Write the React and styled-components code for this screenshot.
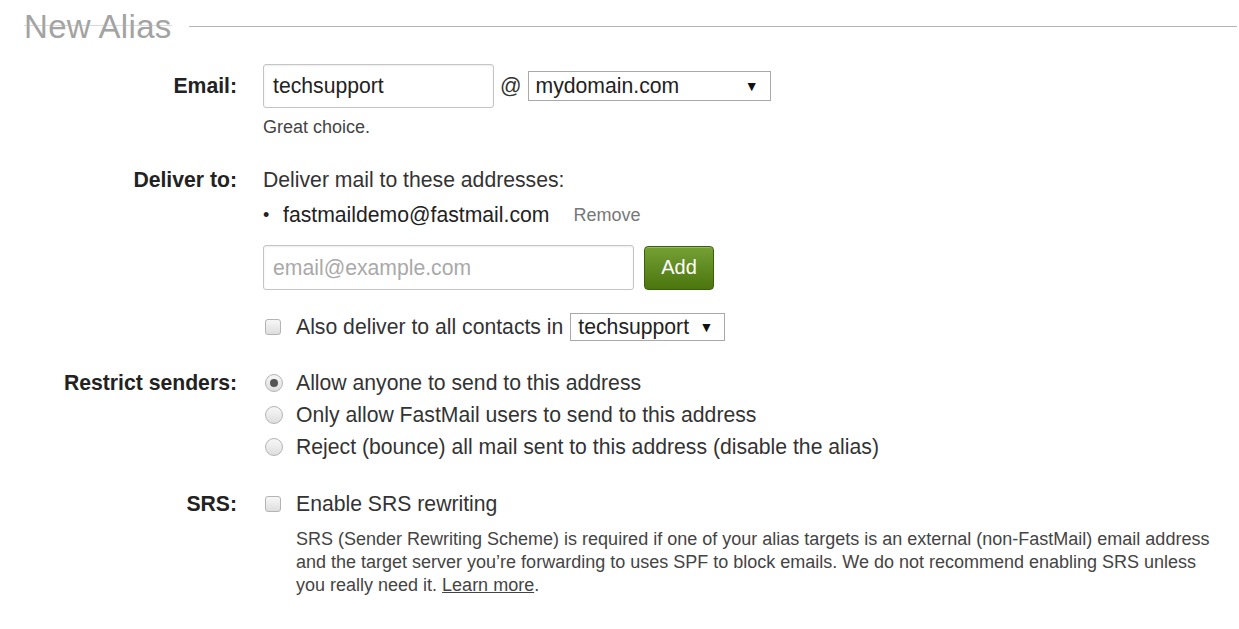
import React from "react";
import styled, { createGlobalStyle } from "styled-components";

const GlobalStyle = createGlobalStyle`
	body {
		margin: 0;
		background: #fff;
		font-family: "Liberation Sans", Arial, sans-serif;
		color: #333;
	}
`;

const App = () => {
	return (
		<Page>
			<GlobalStyle />
			<Header>
				<Title>New Alias</Title>
				<Rule />
			</Header>

			<Field $top={17}>
				<Label $lh={44}>Email:</Label>
				<Content>
					<InlineRow>
						<TextInput $width={231} $height={44}>techsupport</TextInput>
						<At>@</At>
						<Select $width={243} $height={30}>
							mydomain.com
							<Arrow>▼</Arrow>
						</Select>
					</InlineRow>
					<Hint>Great choice.</Hint>
				</Content>
			</Field>

			<Field $top={26}>
				<Label>Deliver to:</Label>
				<Content>
					<Line>Deliver mail to these addresses:</Line>
					<AddressItem>
						<Bullet>•</Bullet>
						fastmaildemo@fastmail.com
						<Remove>Remove</Remove>
					</AddressItem>
					<InlineRow $top={14}>
						<TextInput $width={371} $height={45} $placeholder>
							email@example.com
						</TextInput>
						<AddButton>Add</AddButton>
					</InlineRow>
					<Option $top={21}>
						<Checkbox />
						Also deliver to all contacts in
						<Select $width={155} $height={28} $left={7} $pad={7}>
							techsupport
							<Arrow>▼</Arrow>
						</Select>
					</Option>
				</Content>
			</Field>

			<Field $top={24}>
				<Label>Restrict senders:</Label>
				<Content>
					<Option>
						<Radio $checked />
						Allow anyone to send to this address
					</Option>
					<Option>
						<Radio />
						Only allow FastMail users to send to this address
					</Option>
					<Option>
						<Radio />
						Reject (bounce) all mail sent to this address (disable the alias)
					</Option>
				</Content>
			</Field>

			<Field $top={25}>
				<Label>SRS:</Label>
				<Content>
					<Option>
						<Checkbox />
						Enable SRS rewriting
					</Option>
					<Description>
						SRS (Sender Rewriting Scheme) is required if one of your alias targets is an
						external (non-FastMail) email address and the target server you’re forwarding
						to uses SPF to block emails. We do not recommend enabling SRS unless you
						really need it. <LearnMore href="#">Learn more</LearnMore>.
					</Description>
				</Content>
			</Field>
		</Page>
	);
};

const Page = styled.div`
	width: 1239px;
	min-height: 629px;
	font-size: 21.2px;
`;

const Header = styled.div`
	display: flex;
	align-items: center;
	padding: 7px 2px 0 24px;
	height: 40px;
`;

const Title = styled.h1`
	position: relative;
	margin: 0;
	font-size: 33px;
	font-weight: normal;
	letter-spacing: 0.3px;
	color: #a3a3a3;
	line-height: 40px;

	&::after {
		content: "";
		position: absolute;
		left: 0;
		right: 0;
		top: 18px;
		height: 1px;
		background: rgba(180, 180, 180, 0.5);
	}
`;

const Rule = styled.div`
	flex: 1;
	height: 1px;
	margin-left: 17px;
	margin-top: -2px;
	background: #b5b5b5;
`;

const Field = styled.div`
	display: flex;
	align-items: flex-start;
	margin-top: ${(p) => p.$top || 0}px;
`;

const Label = styled.div`
	width: 237px;
	margin-right: 26px;
	text-align: right;
	font-weight: bold;
	color: #222;
	line-height: ${(p) => p.$lh || 32}px;
	flex-shrink: 0;
`;

const Content = styled.div`
	display: flex;
	flex-direction: column;
	align-items: flex-start;
`;

const InlineRow = styled.div`
	display: flex;
	align-items: center;
	margin-top: ${(p) => p.$top || 0}px;
`;

const TextInput = styled.div`
	box-sizing: border-box;
	width: ${(p) => p.$width}px;
	height: ${(p) => p.$height}px;
	padding: 0 9px;
	display: flex;
	align-items: center;
	border: 1px solid #c4c4c4;
	border-radius: 3px;
	box-shadow: inset 0 1px 2px rgba(0, 0, 0, 0.08);
	color: ${(p) => (p.$placeholder ? "#a9a9a9" : "#222")};
`;

const At = styled.span`
	margin: 0 6px 0 6px;
	color: #333;
`;

const Select = styled.div`
	box-sizing: border-box;
	width: ${(p) => p.$width}px;
	height: ${(p) => p.$height}px;
	margin-left: ${(p) => p.$left || 0}px;
	padding: 0 11px 0 ${(p) => p.$pad || 7}px;
	display: flex;
	align-items: center;
	justify-content: space-between;
	border: 1px solid #a9a9a9;
	background: #fff;
	color: #222;
`;

const Arrow = styled.span`
	font-size: 14px;
	color: #111;
`;

const Hint = styled.div`
	margin-top: 8px;
	font-size: 18px;
	line-height: 22px;
	color: #444;
`;

const Line = styled.div`
	line-height: 32px;
	color: #333;
`;

const AddressItem = styled.div`
	display: flex;
	align-items: center;
	margin-top: 3px;
	line-height: 32px;
	color: #222;
`;

const Bullet = styled.span`
	width: 20px;
	font-size: 18px;
`;

const Remove = styled.span`
	margin-left: 24px;
	font-size: 18px;
	color: #777;
`;

const AddButton = styled.button`
	box-sizing: border-box;
	margin-left: 10px;
	width: 70px;
	height: 44px;
	border: 1px solid #3b5f0b;
	border-radius: 4px;
	background: linear-gradient(#74a034, #4b760f);
	box-shadow: inset 0 1px 0 rgba(255, 255, 255, 0.25);
	color: #fff;
	font-family: inherit;
	font-size: 20px;
`;

const Option = styled.div`
	display: flex;
	align-items: center;
	margin-top: ${(p) => p.$top || 0}px;
	line-height: 32px;
	color: #333;
`;

const Checkbox = styled.span`
	box-sizing: border-box;
	width: 16px;
	height: 16px;
	margin: 0 15px 0 2px;
	border: 1px solid #b4b4b4;
	border-radius: 3px;
	background: linear-gradient(#f7f7f7, #dedede);
	flex-shrink: 0;
`;

const Radio = styled.span`
	box-sizing: border-box;
	position: relative;
	width: 18px;
	height: 18px;
	margin: 0 13px 0 2px;
	border: 1px solid #b4b4b4;
	border-radius: 50%;
	background: linear-gradient(#f7f7f7, #dedede);
	flex-shrink: 0;

	&::after {
		content: "";
		display: ${(p) => (p.$checked ? "block" : "none")};
		position: absolute;
		left: 4px;
		top: 4px;
		width: 8px;
		height: 8px;
		border-radius: 50%;
		background: #555;
	}
`;

const Description = styled.p`
	margin: 8px 0 0 33px;
	width: 930px;
	font-size: 18px;
	line-height: 23px;
	color: #444;
`;

const LearnMore = styled.a`
	color: #444;
	text-decoration: underline;
`;

export default App;
